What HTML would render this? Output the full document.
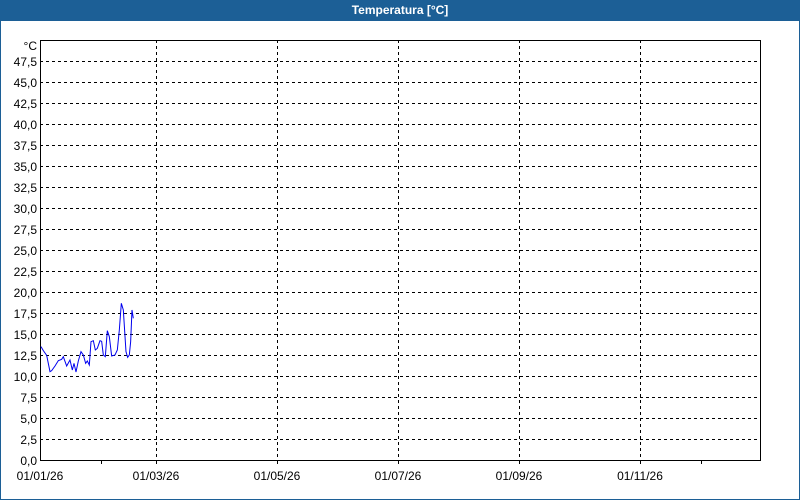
<!DOCTYPE html>
<html><head><style>
body{margin:0;width:800px;height:500px;overflow:hidden;background:#fff;font-family:"Liberation Sans",sans-serif}
.t{position:absolute;left:0;top:0;width:800px;height:21px;background:#1c5f96;color:#fff;font-weight:bold;font-size:12px;text-align:center;line-height:20px}
.frame{position:absolute;left:0;top:0;width:798px;height:498px;border:1px solid #1c5f96}
</style></head><body>
<div class="frame"></div>
<div class="t">Temperatura [°C]</div>
<svg width="800" height="500" style="position:absolute;left:0;top:0" font-family="'Liberation Sans',sans-serif" font-size="12" fill="#000">
<g stroke="#000" stroke-dasharray="3,3" stroke-width="1">
<line x1="40" x2="760" y1="61.5" y2="61.5"/><line x1="40" x2="760" y1="82.5" y2="82.5"/><line x1="40" x2="760" y1="103.5" y2="103.5"/><line x1="40" x2="760" y1="124.5" y2="124.5"/><line x1="40" x2="760" y1="145.5" y2="145.5"/><line x1="40" x2="760" y1="166.5" y2="166.5"/><line x1="40" x2="760" y1="187.5" y2="187.5"/><line x1="40" x2="760" y1="208.5" y2="208.5"/><line x1="40" x2="760" y1="229.5" y2="229.5"/><line x1="40" x2="760" y1="250.5" y2="250.5"/><line x1="40" x2="760" y1="271.5" y2="271.5"/><line x1="40" x2="760" y1="292.5" y2="292.5"/><line x1="40" x2="760" y1="313.5" y2="313.5"/><line x1="40" x2="760" y1="334.5" y2="334.5"/><line x1="40" x2="760" y1="355.5" y2="355.5"/><line x1="40" x2="760" y1="376.5" y2="376.5"/><line x1="40" x2="760" y1="397.5" y2="397.5"/><line x1="40" x2="760" y1="418.5" y2="418.5"/><line x1="40" x2="760" y1="439.5" y2="439.5"/>
<line y1="40" y2="460" x1="156.5" x2="156.5"/><line y1="40" y2="460" x1="277.5" x2="277.5"/><line y1="40" y2="460" x1="398.5" x2="398.5"/><line y1="40" y2="460" x1="519.5" x2="519.5"/><line y1="40" y2="460" x1="640.5" x2="640.5"/>
</g>
<rect x="40.5" y="40.5" width="720" height="420" fill="none" stroke="#000"/>
<g stroke="#000"><line x1="101.5" x2="101.5" y1="460" y2="464"/><line x1="701.5" x2="701.5" y1="460" y2="464"/><line x1="156.5" x2="156.5" y1="460" y2="464"/><line x1="277.5" x2="277.5" y1="460" y2="464"/><line x1="398.5" x2="398.5" y1="460" y2="464"/><line x1="519.5" x2="519.5" y1="460" y2="464"/><line x1="640.5" x2="640.5" y1="460" y2="464"/></g>
<g text-anchor="end">
<text x="37" y="50">°C</text>
<text x="37" y="66">47,5</text><text x="37" y="87">45,0</text><text x="37" y="108">42,5</text><text x="37" y="129">40,0</text><text x="37" y="150">37,5</text><text x="37" y="171">35,0</text><text x="37" y="192">32,5</text><text x="37" y="213">30,0</text><text x="37" y="234">27,5</text><text x="37" y="255">25,0</text><text x="37" y="276">22,5</text><text x="37" y="297">20,0</text><text x="37" y="318">17,5</text><text x="37" y="339">15,0</text><text x="37" y="360">12,5</text><text x="37" y="381">10,0</text><text x="37" y="402">7,5</text><text x="37" y="423">5,0</text><text x="37" y="444">2,5</text><text x="37" y="465">0,0</text>
</g>
<g text-anchor="middle">
<text x="40" y="480">01/01/26</text><text x="156" y="480">01/03/26</text><text x="277" y="480">01/05/26</text><text x="398" y="480">01/07/26</text><text x="519" y="480">01/09/26</text><text x="640" y="480">01/11/26</text>
</g>
<g transform="translate(0,280) scale(0.3333)">
<polyline fill="none" stroke="#0000ee" stroke-width="1" vector-effect="non-scaling-stroke" points="123,200 130,212 140,226 150,275 155,272 165,258 175,242 185,238 190,230 200,258 210,240 217,270 222,250 228,276 235,243 243,215 250,225 257,250 262,243 268,255 273,185 280,182 286,210 292,205 300,182 305,184 310,225 316,230 322,152 328,170 335,228 345,225 352,210 358,150 364,70 370,90 378,215 383,232 388,225 392,185 396,90 400,115"/>
</g>
</svg>
</body></html>
